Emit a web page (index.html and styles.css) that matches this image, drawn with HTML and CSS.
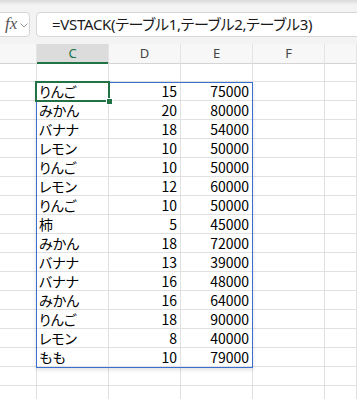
FILE: index.html
```html
<!DOCTYPE html>
<html lang="ja">
<head>
    <meta charset="UTF-8">
    <meta name="viewport" content="width=device-width, initial-scale=1.0">
    <title>VSTACK</title>
    <link rel="stylesheet" href="styles.css">
</head>
<body>
    <div class="app">
        <div class="formula-bar">
            <div class="fx-box">
                <span class="fx">fx</span>
                <svg class="chevron" width="8" height="5" viewBox="0 0 8 5">
                    <path d="M0.5 0.5 L4 4 L7.5 0.5" fill="none" stroke="#9a9a9a" stroke-width="1"/>
                </svg>
            </div>
            <div class="formula-input">=VSTACK(テーブル1,テーブル2,テーブル3)</div>
        </div>

        <div class="sheet">
            <div class="cell head"></div>
            <div class="cell head selected">C</div>
            <div class="cell head">D</div>
            <div class="cell head">E</div>
            <div class="cell head">F</div>
            <div class="cell head"></div>

            <div class="cell"></div><div class="cell"></div><div class="cell"></div><div class="cell"></div><div class="cell"></div><div class="cell"></div>

            <div class="cell"></div><div class="cell text">りんご</div><div class="cell num">15</div><div class="cell num">75000</div><div class="cell"></div><div class="cell"></div>
            <div class="cell"></div><div class="cell text">みかん</div><div class="cell num">20</div><div class="cell num">80000</div><div class="cell"></div><div class="cell"></div>
            <div class="cell"></div><div class="cell text">バナナ</div><div class="cell num">18</div><div class="cell num">54000</div><div class="cell"></div><div class="cell"></div>
            <div class="cell"></div><div class="cell text">レモン</div><div class="cell num">10</div><div class="cell num">50000</div><div class="cell"></div><div class="cell"></div>
            <div class="cell"></div><div class="cell text">りんご</div><div class="cell num">10</div><div class="cell num">50000</div><div class="cell"></div><div class="cell"></div>
            <div class="cell"></div><div class="cell text">レモン</div><div class="cell num">12</div><div class="cell num">60000</div><div class="cell"></div><div class="cell"></div>
            <div class="cell"></div><div class="cell text">りんご</div><div class="cell num">10</div><div class="cell num">50000</div><div class="cell"></div><div class="cell"></div>
            <div class="cell"></div><div class="cell text">柿</div><div class="cell num">5</div><div class="cell num">45000</div><div class="cell"></div><div class="cell"></div>
            <div class="cell"></div><div class="cell text">みかん</div><div class="cell num">18</div><div class="cell num">72000</div><div class="cell"></div><div class="cell"></div>
            <div class="cell"></div><div class="cell text">バナナ</div><div class="cell num">13</div><div class="cell num">39000</div><div class="cell"></div><div class="cell"></div>
            <div class="cell"></div><div class="cell text">バナナ</div><div class="cell num">16</div><div class="cell num">48000</div><div class="cell"></div><div class="cell"></div>
            <div class="cell"></div><div class="cell text">みかん</div><div class="cell num">16</div><div class="cell num">64000</div><div class="cell"></div><div class="cell"></div>
            <div class="cell"></div><div class="cell text">りんご</div><div class="cell num">18</div><div class="cell num">90000</div><div class="cell"></div><div class="cell"></div>
            <div class="cell"></div><div class="cell text">レモン</div><div class="cell num">8</div><div class="cell num">40000</div><div class="cell"></div><div class="cell"></div>
            <div class="cell"></div><div class="cell text">もも</div><div class="cell num">10</div><div class="cell num">79000</div><div class="cell"></div><div class="cell"></div>

            <div class="cell"></div><div class="cell"></div><div class="cell"></div><div class="cell"></div><div class="cell"></div><div class="cell"></div>
            <div class="cell"></div><div class="cell"></div><div class="cell"></div><div class="cell"></div><div class="cell"></div><div class="cell"></div>

            <!-- スピル範囲と選択セル -->
            <div class="spill-range"></div>
            <div class="active-cell"><span class="fill-handle"></span></div>
        </div>
    </div>
</body>
</html>
```

FILE: styles.css
```css
* {
    margin: 0;
    padding: 0;
    box-sizing: border-box;
}

body {
    background: #ffffff;
    font-family: "Noto Sans CJK JP", "Noto Sans", sans-serif;
    color: #000;
    overflow: hidden;
}

.app {
    width: 357px;
    height: 399px;
    overflow: hidden;
}

/* 数式バー */
.formula-bar {
    height: 44px;
    display: flex;
    gap: 6px;
    padding-top: 12px;
    background: linear-gradient(#d9d9d9 0px, #e9e9e9 3px, #f3f3f3 5px, #f3f3f3 100%);
}

.fx-box {
    width: 36px;
    height: 25px;
    margin-left: -6px;
    padding-left: 10px;
    display: flex;
    align-items: center;
    gap: 3px;
    background: #fff;
    border: 1px solid #d6d6d6;
    border-radius: 4px;
}

.fx {
    font-family: "Liberation Serif", serif;
    font-style: italic;
    font-size: 17px;
    color: #555;
    line-height: 1;
    margin-top: -2px;
}

.chevron {
    margin-top: 1px;
}

.formula-input {
    flex: 1;
    height: 25px;
    margin-right: -10px;
    padding-left: 15px;
    background: #fff;
    border: 1px solid #d6d6d6;
    border-radius: 4px;
    font-family: "Noto Sans", "Noto Sans CJK JP", sans-serif;
    font-feature-settings: "palt";
    font-size: 15px;
    letter-spacing: -0.3px;
    line-height: 22px;
    color: #1a1a1a;
    white-space: nowrap;
    overflow: hidden;
}

/* シート */
.sheet {
    position: relative;
    display: grid;
    grid-template-columns: 37px 72px 72px 72px 72px 1fr;
    grid-auto-rows: 19px;
}

.cell {
    border-right: 1px solid #e1e1e1;
    border-bottom: 1px solid #e1e1e1;
    font-size: 14px;
    font-feature-settings: "palt";
    line-height: 18px;
    white-space: nowrap;
    overflow: hidden;
}

.cell.head {
    height: 20px;
    background: #f7f7f7;
    border-right: 1px solid #e4e4e4;
    border-bottom: 1px solid #d4d4d4;
    font-family: "Noto Sans", sans-serif;
    font-size: 13px;
    line-height: 19px;
    text-align: center;
    color: #444;
}

.sheet .head {
    margin-bottom: 1px;
}

.cell.head.selected {
    background: #dcdcdc;
    border-bottom: 2px solid #217346;
    color: #217346;
}

.text {
    padding-left: 2px;
}

.num {
    text-align: right;
    padding-right: 3px;
}

.spill-range {
    position: absolute;
    left: 36px;
    top: 38px;
    width: 217px;
    height: 286px;
    border: 1px solid #3a6fcf;
    box-shadow: 0 2px 4px rgba(0, 0, 0, 0.12);
    pointer-events: none;
}

.active-cell {
    position: absolute;
    left: 35px;
    top: 37px;
    width: 75px;
    height: 21px;
    border: 2px solid #217346;
}

.fill-handle {
    position: absolute;
    right: -5px;
    bottom: -5px;
    width: 7px;
    height: 7px;
    background: #217346;
    border: 1px solid #fff;
}
```
